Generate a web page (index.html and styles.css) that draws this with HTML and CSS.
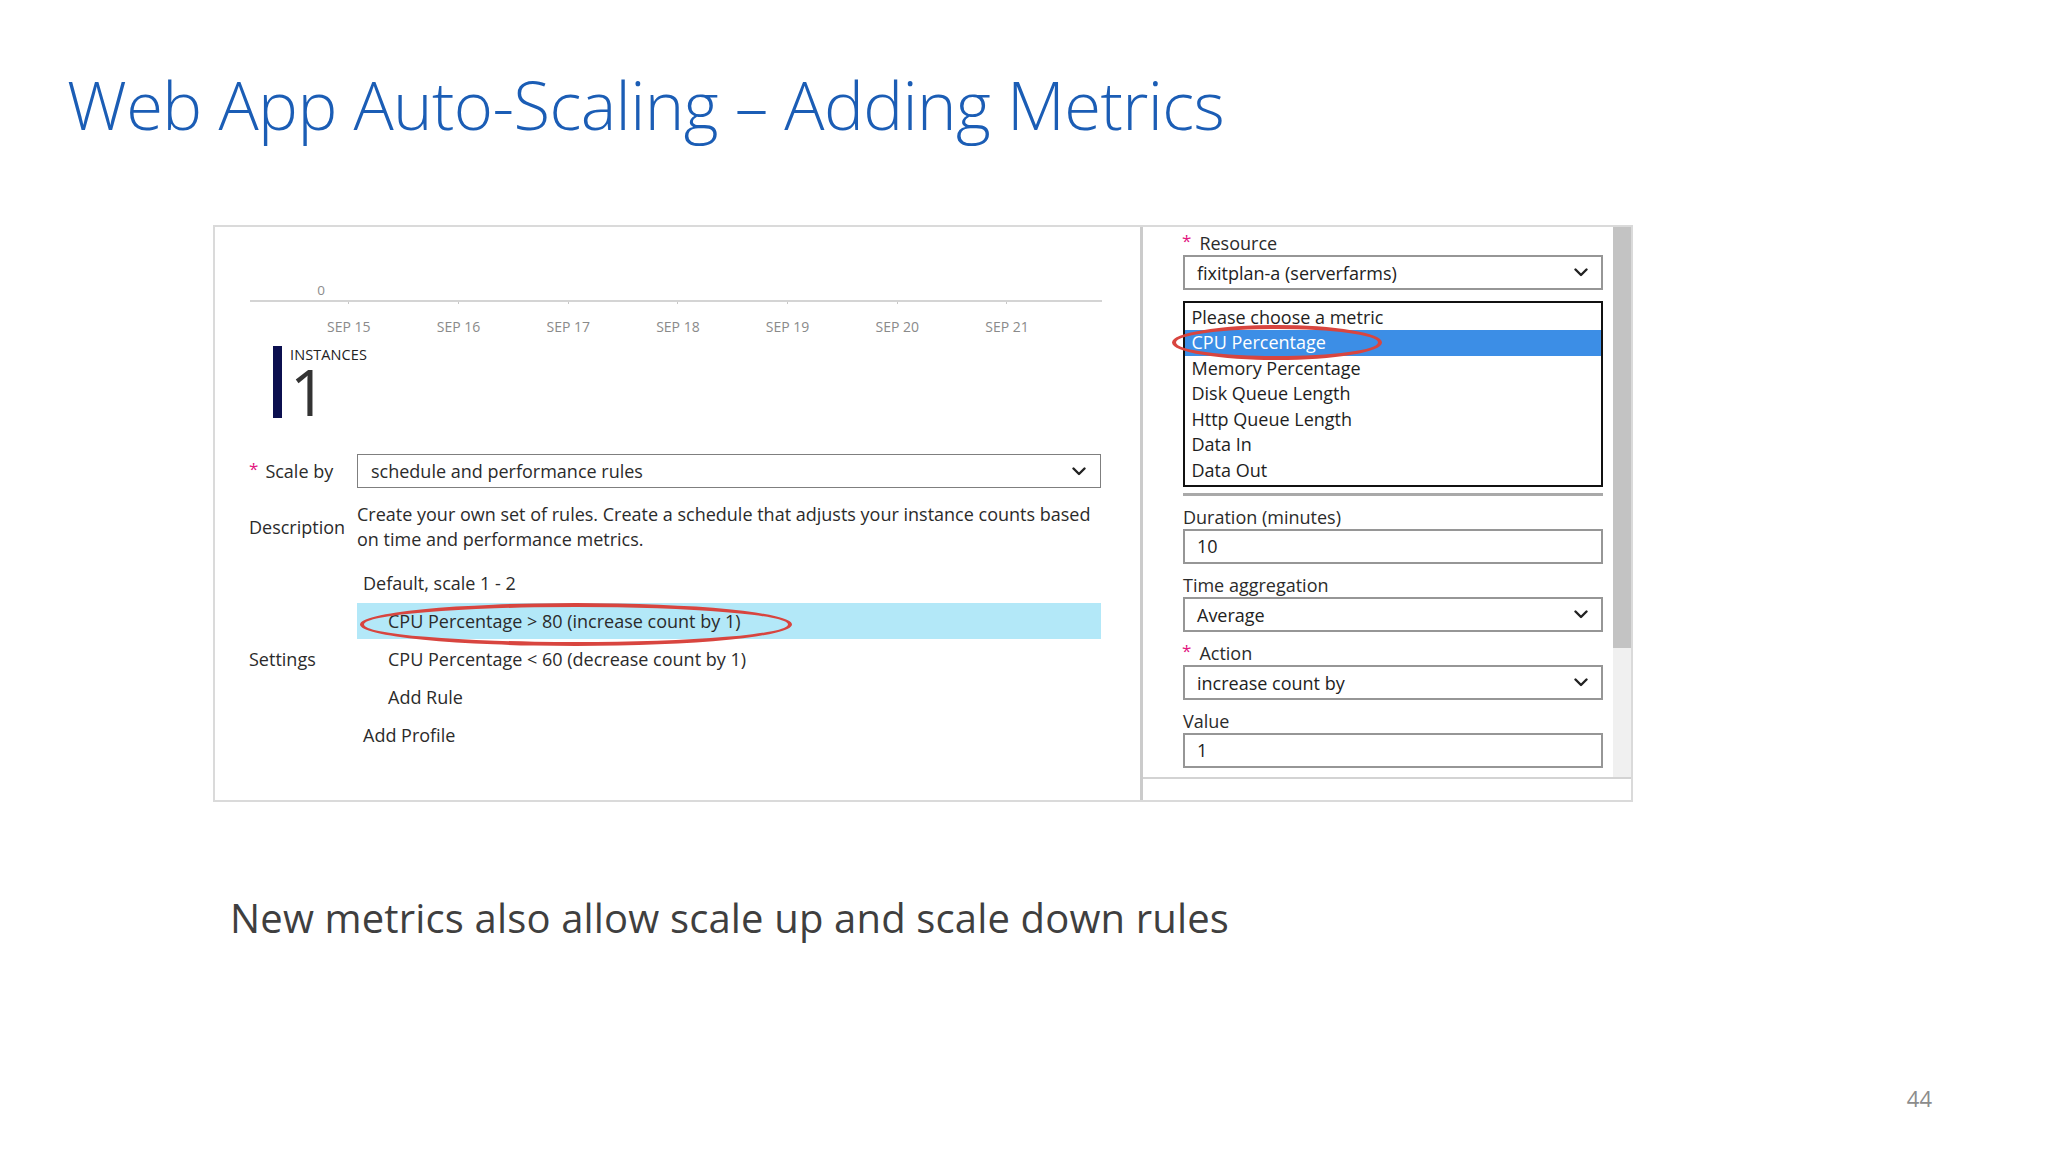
FILE: index.html
```html
<!DOCTYPE html>
<html>
<head>
<meta charset="utf-8">
<title>Web App Auto-Scaling – Adding Metrics</title>
<link rel="stylesheet" href="styles.css">
</head>
<body>
<div class="slide">
  <h1 class="title">Web App Auto-Scaling – Adding Metrics</h1>

  <div class="panel">
    <div class="left-pane">
      <div class="y-zero">0</div>
      <div class="axis">
        <div class="tick"><span>SEP 15</span></div>
        <div class="tick"><span>SEP 16</span></div>
        <div class="tick"><span>SEP 17</span></div>
        <div class="tick"><span>SEP 18</span></div>
        <div class="tick"><span>SEP 19</span></div>
        <div class="tick"><span>SEP 20</span></div>
        <div class="tick"><span>SEP 21</span></div>
      </div>
      <div class="instances">
        <div class="inst-bar"></div>
        <div class="inst-text">
          <div class="inst-label">INSTANCES</div>
          <div class="inst-value">1</div>
        </div>
      </div>

      <div class="form-grid">
        <div class="lbl"><span class="req">*</span>Scale by</div>
        <div class="select select-left">
          <span>schedule and performance rules</span>
          <svg class="chev" width="14" height="9" viewBox="0 0 14 9"><polyline points="1.5,1.5 7,7 12.5,1.5"/></svg>
        </div>

        <div class="lbl lbl-desc">Description</div>
        <div class="desc">Create your own set of rules. Create a schedule that adjusts your instance counts based<br>on time and performance metrics.</div>

        <div class="lbl lbl-settings">Settings</div>
        <div class="settings">
          <div class="item profile">Default, scale 1 - 2</div>
          <div class="item rule selected">CPU Percentage &gt; 80 (increase count by 1)<span class="ring ring-left"></span></div>
          <div class="item rule">CPU Percentage &lt; 60 (decrease count by 1)</div>
          <div class="item rule">Add Rule</div>
          <div class="item profile">Add Profile</div>
        </div>
      </div>
    </div>

    <div class="right-pane">
      <div class="scroll-area">
        <div class="form">
          <div class="flabel"><span class="req">*</span>Resource</div>
          <div class="select field">
            <span>fixitplan-a (serverfarms)</span>
            <svg class="chev" width="14" height="9" viewBox="0 0 14 9"><polyline points="1.5,1.5 7,7 12.5,1.5"/></svg>
          </div>

          <div class="metric-area">
            <div class="listbox">
              <div class="opt">Please choose a metric</div>
              <div class="opt opt-sel">CPU Percentage</div>
              <div class="opt">Memory Percentage</div>
              <div class="opt">Disk Queue Length</div>
              <div class="opt">Http Queue Length</div>
              <div class="opt">Data In</div>
              <div class="opt">Data Out</div>
              <span class="ring ring-right"></span>
            </div>
          </div>

          <div class="group">
            <div class="flabel">Duration (minutes)</div>
            <div class="field input">10</div>
          </div>
          <div class="group">
            <div class="flabel">Time aggregation</div>
            <div class="select field">
              <span>Average</span>
              <svg class="chev" width="14" height="9" viewBox="0 0 14 9"><polyline points="1.5,1.5 7,7 12.5,1.5"/></svg>
            </div>
          </div>
          <div class="group">
            <div class="flabel"><span class="req">*</span>Action</div>
            <div class="select field">
              <span>increase count by</span>
              <svg class="chev" width="14" height="9" viewBox="0 0 14 9"><polyline points="1.5,1.5 7,7 12.5,1.5"/></svg>
            </div>
          </div>
          <div class="group">
            <div class="flabel">Value</div>
            <div class="field input">1</div>
          </div>
        </div>
        <div class="scrollbar"><div class="thumb"></div></div>
      </div>
      <div class="pane-foot"></div>
    </div>
  </div>

  <p class="caption">New metrics also allow scale up and scale down rules</p>
  <div class="footer"><span class="page-num">44</span></div>
</div>
</body>
</html>
```

FILE: styles.css
```css
* { box-sizing: border-box; }

html, body {
  margin: 0;
  padding: 0;
  background: #ffffff;
}

body {
  font-family: "Open Sans", "Noto Sans", "DejaVu Sans", sans-serif;
  color: #2b2b2b;
}

.slide {
  width: 2048px;
  height: 1152px;
  overflow: hidden;
}

.title {
  margin: 64px 0 0 67px;
  font-size: 67px;
  line-height: 80px;
  font-weight: 300;
  letter-spacing: -0.6px;
  color: #1b5db5;
  white-space: nowrap;
}

.panel {
  margin: 81px 0 0 213px;
  width: 1420px;
  height: 577px;
  border: 2px solid #dadada;
  display: flex;
  background: #fff;
}

/* ---------- left pane ---------- */
.left-pane {
  width: 925px;
  flex: none;
  padding: 53px 0 0 34px;
}

.y-zero {
  margin-left: 62px;
  width: 20px;
  height: 20px;
  line-height: 20px;
  text-align: center;
  font-size: 13.5px;
  color: #8c8c8c;
}

.axis {
  margin-left: 1px;
  width: 852px;
  border-top: 2px solid #d4d4d4;
  display: flex;
  padding-left: 44px;
  height: 37px;
}

.tick {
  flex: none;
  width: 109.7px;
  display: flex;
  flex-direction: column;
  align-items: center;
}

.tick::before {
  content: "";
  width: 1px;
  height: 4px;
  background: #c8c8c8;
}

.tick span {
  margin-top: 13px;
  height: 20px;
  line-height: 20px;
  font-size: 14px;
  color: #8a8a8a;
  white-space: nowrap;
}

.instances {
  margin: 9px 0 0 24px;
  display: flex;
  height: 72px;
}

.inst-bar {
  width: 9px;
  height: 72px;
  background: #0b0f4f;
}

.inst-text {
  margin-left: 8px;
  padding-top: 1px;
}

.inst-label {
  font-size: 14.5px;
  line-height: 16px;
  letter-spacing: 0.1px;
  color: #222;
}

.inst-value {
  margin-top: 4px;
  font-size: 64px;
  line-height: 50px;
  color: #333;
}

.form-grid {
  margin-top: 36px;
  display: grid;
  grid-template-columns: 108px 744px;
  font-size: 18px;
  color: #2b2b2b;
}

.lbl {
  display: flex;
  align-items: center;
  white-space: nowrap;
}

.req {
  color: #e2157f;
  font-size: 17px;
  margin-right: 7px;
  position: relative;
  top: -3px;
}

.select {
  display: flex;
  justify-content: space-between;
  align-items: center;
}

.select-left {
  height: 34px;
  border: 1px solid #7f7f7f;
  padding: 0 14px 0 13px;
}

.chev polyline {
  fill: none;
  stroke: #222;
  stroke-width: 2.4;
  stroke-linecap: round;
  stroke-linejoin: round;
}

.lbl-desc, .desc {
  margin-top: 14px;
}

.desc {
  line-height: 25px;
  white-space: nowrap;
}

.lbl-settings, .settings {
  margin-top: 12px;
}

.settings {
  display: flex;
  flex-direction: column;
}

.item {
  height: 38px;
  line-height: 38px;
  white-space: nowrap;
}

.item.profile { padding-left: 6px; }
.item.rule { padding-left: 31px; }

.item.selected {
  position: relative;
  background: #b3e8f8;
  background-clip: content-box;
  padding-top: 1px;
  padding-bottom: 1px;
  line-height: 36px;
  padding-left: 0;
  text-indent: 31px;
}

.ring {
  position: absolute;
  border: 4px solid #d8453f;
  border-radius: 50%;
  pointer-events: none;
}

.ring-left {
  left: 3px;
  top: 1px;
  width: 432px;
  height: 43px;
}

/* ---------- right pane ---------- */
.right-pane {
  flex: 1;
  border-left: 3px solid #cbcbcb;
  display: flex;
  flex-direction: column;
}

.scroll-area {
  height: 550px;
  display: flex;
}

.form {
  flex: 1;
  padding: 4px 10px 0 40px;
  font-size: 18px;
  color: #2b2b2b;
}

.flabel {
  height: 24px;
  line-height: 24px;
  white-space: nowrap;
}

.flabel .req {
  margin-right: 8px;
  margin-left: -1px;
}

.field {
  width: 420px;
  height: 35px;
  border: 2px solid #969696;
  padding: 0 13px 0 12px;
  color: #222;
}

.input {
  line-height: 31px;
}

.metric-area {
  margin-top: 11px;
  width: 420px;
  height: 195px;
  border-bottom: 3px solid #a9a9a9;
}

.listbox {
  position: relative;
  height: 186px;
  border: 2.5px solid #111;
  padding-top: 1.5px;
  background: #fff;
}

.opt {
  height: 25.5px;
  line-height: 25.5px;
  padding-left: 6.5px;
  color: #1e1e1e;
  white-space: nowrap;
}

.opt-sel {
  background: #3c8ee6;
  color: #fff;
}

.ring-right {
  left: -13px;
  top: 22px;
  width: 210px;
  height: 35px;
}

.group {
  margin-top: 9px;
}

.scrollbar {
  width: 18px;
  flex: none;
  background: #f0f0f0;
}

.thumb {
  height: 421px;
  background: #c3c3c3;
}

.pane-foot {
  flex: 1;
  border-top: 2px solid #d3d3d3;
}

/* ---------- bottom ---------- */
.caption {
  margin: 92px 0 0 230px;
  font-size: 40px;
  line-height: 48px;
  letter-spacing: 0.15px;
  color: #3f3f3f;
  white-space: nowrap;
}

.footer {
  margin-top: 142px;
  display: flex;
  justify-content: flex-end;
  padding-right: 116px;
}

.page-num {
  font-size: 22px;
  line-height: 28px;
  color: #8c8c8c;
}
```
